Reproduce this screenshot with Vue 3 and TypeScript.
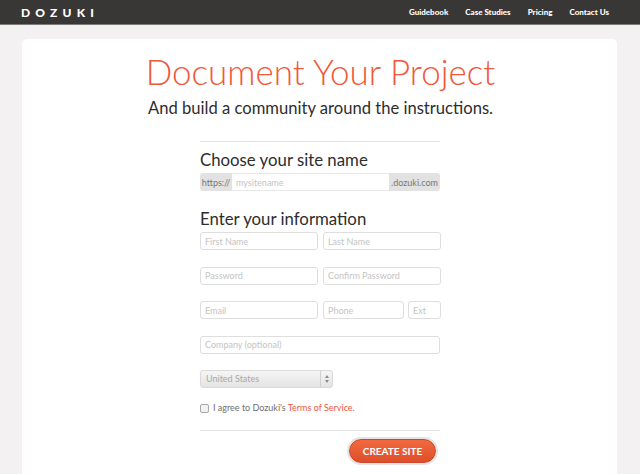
<script setup lang="ts">
const navLinks: string[] = ['Guidebook', 'Case Studies', 'Pricing', 'Contact Us']
</script>

<template>
  <div class="page">
    <header class="topbar">
      <span class="logo">DOZUKI</span>
      <nav class="nav">
        <a v-for="link in navLinks" :key="link" class="nav-link">{{ link }}</a>
      </nav>
    </header>

    <main class="card">
      <h1 class="title">Document Your Project</h1>
      <p class="subtitle">And build a community around the instructions.</p>

      <form class="form" @submit.prevent>
        <h2 class="section first">Choose your site name</h2>
        <div class="site-group">
          <span class="addon left">https://</span>
          <input class="site-input" placeholder="mysitename" />
          <span class="addon right">.dozuki.com</span>
        </div>

        <h2 class="section second">Enter your information</h2>
        <div class="row">
          <input class="field" placeholder="First Name" />
          <input class="field" placeholder="Last Name" />
        </div>
        <div class="row">
          <input class="field" placeholder="Password" />
          <input class="field" placeholder="Confirm Password" />
        </div>
        <div class="row">
          <input class="field" placeholder="Email" />
          <div class="phone">
            <input class="field" placeholder="Phone" />
            <input class="field ext" placeholder="Ext" />
          </div>
        </div>
        <div class="row single">
          <input class="field" placeholder="Company (optional)" />
        </div>

        <div class="select">
          <span class="select-value">United States</span>
          <span class="select-arrows">
            <svg width="6" height="10" viewBox="0 0 6 10" fill="#8a8a8a">
              <path d="M3 1 5 4H1z" />
              <path d="M3 9 1 6h4z" />
            </svg>
          </span>
        </div>

        <label class="agree">
          <span class="checkbox"></span>
          <span>I agree to Dozuki's <a class="terms">Terms of Service.</a></span>
        </label>

        <div class="actions">
          <button class="create" type="button">CREATE SITE</button>
        </div>
      </form>
    </main>
  </div>
</template>

<style>
html,
body {
  margin: 0;
  height: 100%;
  overflow: hidden;
  background: #f3f1f1;
}
</style>

<style scoped>
.page {
  height: 474px;
  overflow: hidden;
  background: #f3f1f1;
  font-family: Lato, "Open Sans", sans-serif;
}

.topbar {
  height: 24px;
  display: flex;
  align-items: center;
  justify-content: space-between;
  padding: 0 31px 0 21px;
  background: #393735;
  border-bottom: 1px solid #7c7a78;
}

.logo {
  color: #fff;
  font-size: 12px;
  font-weight: 900;
  letter-spacing: 5.2px;
}

.nav {
  display: flex;
  gap: 17px;
}

.nav-link {
  color: #fff;
  font-size: 8px;
  font-weight: 900;
}

.card {
  margin: 14px 23px 0 22px;
  height: 460px;
  padding-top: 9px;
  background: #fff;
  border-radius: 5px 5px 0 0;
  box-sizing: border-box;
}

.title {
  margin: 0;
  padding-left: 2px;
  text-align: center;
  color: #f0583a;
  font-size: 35px;
  line-height: 46px;
  font-weight: 300;
}

.subtitle {
  margin: 3px 0 0;
  padding-left: 2px;
  text-align: center;
  color: #2d2d2d;
  font-size: 16.6px;
  line-height: 22px;
}

.form {
  width: 240px;
  margin: 22px 0 0 178px;
  border-top: 1px solid #e2e2e2;
}

.section {
  margin: 0;
  color: #2d2d2d;
  font-size: 16.8px;
  line-height: 22px;
  font-weight: 400;
}

.section.first {
  margin-top: 7px;
}

.section.second {
  margin: 17px 0 2px;
}

.site-group {
  display: flex;
  height: 18px;
  margin-top: 2px;
  font-size: 9px;
}

.addon {
  display: flex;
  align-items: center;
  justify-content: center;
  background: #e2e2e2;
  color: #777;
}

.addon.left {
  width: 32px;
  border-radius: 3px 0 0 3px;
}

.addon.right {
  width: 51px;
  border-radius: 0 3px 3px 0;
}

.site-input {
  flex: 1;
  min-width: 0;
  padding: 0 4px;
  border: 1px solid #e8e8e8;
  border-width: 1px 0;
  font: inherit;
  outline: none;
}

.row {
  display: flex;
  gap: 5px;
  margin-bottom: 16.5px;
}

.row > .field,
.phone {
  width: 118px;
}

.row.single > .field {
  width: 241px;
}

.phone {
  display: flex;
  gap: 4px;
}

.phone .field {
  width: 81px;
}

.phone .field.ext {
  width: 33px;
}

.field {
  height: 18px;
  box-sizing: border-box;
  padding: 0 4px;
  border: 1px solid #dedede;
  border-radius: 3px;
  background: #fff;
  font-family: inherit;
  font-size: 9px;
  outline: none;
}

.field::placeholder,
.site-input::placeholder {
  color: #c4c4c4;
  opacity: 1;
}

.select {
  display: flex;
  width: 133px;
  height: 18px;
  box-sizing: border-box;
  border: 1px solid #dadada;
  border-radius: 3px;
  background: linear-gradient(#f5f5f5, #e4e4e4);
  color: #a8a8a8;
  font-size: 9px;
  line-height: 16px;
}

.select-value {
  flex: 1;
  padding-left: 5px;
}

.select-arrows {
  display: flex;
  align-items: center;
  justify-content: center;
  width: 11px;
  border-left: 1px solid #d0d0d0;
}

.agree {
  display: flex;
  align-items: center;
  gap: 4px;
  margin-top: 14px;
  color: #6e6e6e;
  font-size: 9px;
  line-height: 12px;
}

.checkbox {
  width: 7px;
  height: 7px;
  border: 1px solid #a8a8a8;
  border-radius: 2px;
  background: #f1f1f1;
}

.terms {
  color: #f0583a;
}

.actions {
  display: flex;
  justify-content: flex-end;
  margin-top: 16px;
  padding: 8px 4px 0 0;
  border-top: 1px solid #e2e2e2;
}

.create {
  width: 87px;
  height: 24px;
  border: 1px solid #c9472a;
  border-radius: 13px;
  background: linear-gradient(#f2693f, #dd4f2a);
  box-shadow: 0 0 0 2px #e4e4e4;
  color: #fff;
  font-family: inherit;
  font-size: 10px;
  font-weight: 700;
  padding: 0;
}
</style>
